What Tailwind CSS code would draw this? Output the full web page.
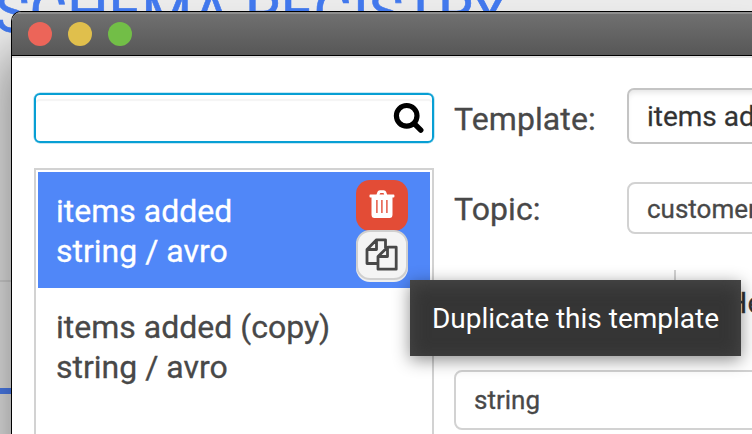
<!DOCTYPE html>
<html lang="en">
<head>
<meta charset="utf-8">
<title>Templates</title>
<script src="https://cdn.jsdelivr.net/npm/@tailwindcss/browser@4"></script>
</head>
<body class="relative h-[434px] w-[752px] overflow-hidden bg-[#ececec] font-['Roboto','Liberation_Sans',sans-serif] text-[#484848]">
  <!-- page behind the window -->
  <div class="absolute inset-0 overflow-hidden">
    <div class="absolute -top-[26px] -left-[5px] whitespace-nowrap text-[58px] leading-[76px] text-[#4279ee] [-webkit-text-stroke:0.6px_#4279ee]">SCHEMA REGISTRY</div>
    <div class="absolute top-[280px] left-0 h-[2px] w-[12px] bg-[#d8d8d8]"></div>
    <div class="absolute top-[388px] left-0 h-[6px] w-[12px] bg-[#4f82f8]"></div>
  </div>

  <!-- window -->
  <main class="absolute top-[11px] right-0 bottom-0 left-[11px] flex flex-col overflow-hidden rounded-tl-[10px] border-t border-l border-black bg-white shadow-[0_50px_50px_10px_rgba(0,0,0,0.4)]">
    <header class="flex h-[44px] shrink-0 items-start gap-4 border-t-2 border-b border-t-[#8e8e8e] border-b-black bg-linear-to-b from-[#707070] to-[#575757] pt-[8px] pl-4">
      <span class="size-6 rounded-full bg-[#ec6559]"></span>
      <span class="size-6 rounded-full bg-[#e0bf4c]"></span>
      <span class="size-6 rounded-full bg-[#72be47]"></span>
    </header>
    <div class="h-[2px] shrink-0 bg-[#e4e4e4]"></div>
    <div class="flex min-h-0 flex-1 overflow-hidden pl-[22px]">
      <section class="flex w-[400px] shrink-0 flex-col pt-[35px]">
        <label class="flex h-[50px] shrink-0 items-center justify-end rounded-[6px] border-2 border-[#079fd4] pr-[8px] shadow-[0_0_0_0.5px_#8fd0e8,inset_0_5px_1px_-1px_#fff,inset_0_7px_1px_-1px_#f4f4f4]">
          <svg class="size-[32px]" viewBox="0 0 32 32" fill="none" stroke="#000"><circle cx="14.7" cy="13.800" r="10.300" stroke-width="5.200"/><path d="M22.500 21.800 28.800 28.100" stroke-width="5.400" stroke-linecap="round"/></svg>
        </label>
        <div class="mt-[25px] min-h-0 flex-1 border-2 border-b-0 border-[#d2d2d2] p-[2px] pb-0">
          <div class="flex h-[116px] justify-between bg-[#5087f8] pt-[8px] pr-[22px] pl-[18px] text-white">
            <div class="pt-[11px] text-[32px] leading-[40px] whitespace-nowrap [-webkit-text-stroke:0.3px_#fff]">items added<br>string / avro</div>
            <div class="flex flex-col">
              <div class="flex h-[51px] w-[52px] justify-center rounded-[14px] bg-[#e34c36] pt-[10px]">
                <svg class="h-[28px] w-[26px]" viewBox="0 0 26 28" fill="none"><path fill="#fff" fill-rule="evenodd" d="M7.500 4.500 8.500 1.800Q9.100.3 10.800.3h4q1.700 0 2.300 1.500l1 2.700h6.500q.8 0 .8.8v1.500q0 .8-.8.8H23.500v16.900q0 3.500-3 3.500h-15q-3 0-3-3.500V7.600H1.300q-.8 0-.8-.8V5.300q0-.8.8-.8Zm3 0h4.700l-.5-1.300q-.1-.3-.5-.3h-2.600q-.4 0-.5.3ZM7.200 10v13h1.400V10Zm5 0v13h1.400V10Zm5 0v13h1.400V10Z"/></svg>
              </div>
              <div class="-mt-px flex h-[50px] w-[52px] justify-center rounded-[14px] border-2 border-[#d0d0d0] bg-[#f4f4f4] pt-[6px] pr-px shadow-[0_2px_0_#eeeeee]">
                <svg class="h-[33px] w-[33px]" viewBox="0 0 33 33" fill="none" stroke="#484848" stroke-width="2.800" stroke-linejoin="round"><path d="M12.500 25.500H2V11.500L11.500 1.800H20.500V10M11.500 1.800V11.500H2M22.500 9.200H31.200V31.200H13V18.500L22.500 9.200V18.500H13"/></svg>
              </div>
            </div>
          </div>
          <div class="pt-[19px] pl-[18px] text-[32px] leading-[40px] whitespace-nowrap [-webkit-text-stroke:0.3px_#484848]">items added (copy)<br>string / avro</div>
        </div>
      </section>
      <section class="ml-[20px] w-[346px] shrink-0 pt-[30px] [-webkit-text-stroke:0.3px_#484848]">
        <div class="flex h-[56px] items-center">
          <span class="w-[173px] shrink-0 pt-[6px] text-[32px] leading-[40px] tracking-[0.1px]">Template:</span>
          <span class="h-[56px] w-[180px] shrink-0 overflow-hidden rounded-[7px] border-2 border-[#c4c4c4] pl-[18px] text-[28px] leading-[53px] whitespace-nowrap text-[#303030] shadow-[inset_0_5px_6px_-3px_rgba(0,0,0,0.12)]">items added</span>
        </div>
        <div class="mt-[38px] flex h-[52px] items-center">
          <span class="w-[173px] shrink-0 pt-[2px] text-[32px] leading-[40px] tracking-[0.1px]">Topic:</span>
          <span class="h-[52px] w-[180px] shrink-0 overflow-hidden rounded-[8px] border-2 border-[#d2d2d2] pl-[18px] text-[26px] leading-[50px] whitespace-nowrap">customers</span>
        </div>
        <div class="mt-[36px] mb-[20px] ml-[220px] flex h-[80px] w-[140px] items-start overflow-hidden border-l-2 border-[#d2d2d2] pt-[13px] pl-[50px] text-[30px] leading-[40px] text-[#303030]">Headers</div>
        <div class="h-[60px] rounded-[8px] border-2 border-[#d2d2d2] pl-[18px] text-[26px] leading-[56px]">string</div>
      </section>
    </div>
  </main>

  <div class="absolute top-[280px] left-[410px] flex h-[76px] w-[331px] items-center justify-center bg-[#353535] pt-[2px] text-[28px] whitespace-nowrap text-white shadow-[0_4px_16px_rgba(0,0,0,0.45),inset_0_4px_18px_#484848]">Duplicate this template</div>
</body>
</html>
